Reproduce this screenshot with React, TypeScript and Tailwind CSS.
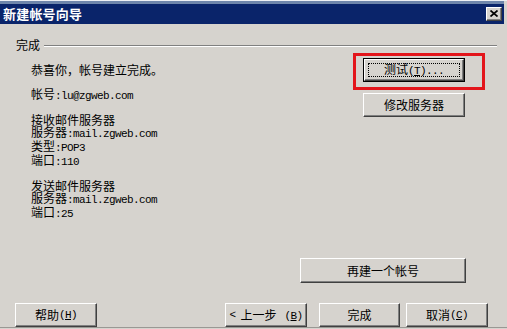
import React from "react";

const mono = "font-['Liberation_Mono',monospace] text-[11px] tracking-[-0.6px]";

const bevel =
  "bg-[#d6d3ce] border border-t-white border-l-white border-r-[#404040] border-b-[#404040] shadow-[inset_-1px_-1px_0_#808080]";

function Btn({ w, children, className = "" }: { w: string; children: React.ReactNode; className?: string }) {
  return (
    <div className={`${w} h-[24px] ${bevel} flex items-center justify-center text-[12px] leading-[12px] text-black ${className}`}>
      {children}
    </div>
  );
}

function Acc({ c }: { c: string }) {
  return (
    <span className={mono}>
      (<span className="underline underline-offset-[1px]">{c}</span>)
    </span>
  );
}

export default function App() {
  return (
    <div className="relative w-[507px] h-[329px] bg-[#d6d3ce] flex flex-col font-['Noto_Sans_CJK_SC',sans-serif] text-black overflow-hidden">
      {/* top frame */}
      <div className="h-[1px] bg-[#eef0f4]" />
      <div className="h-[3px] bg-[#6f86ab] mr-[3px]" />
      {/* title bar */}
      <div className="h-[21px] bg-[#0a246a] mr-[3px] flex items-center justify-between pl-[3px] pr-[2px]">
        <span className="text-white font-bold text-[13px] leading-[13px] tracking-[0.2px]">新建帐号向导</span>
        <div className={`w-[16px] h-[14px] ${bevel} flex items-center justify-center`}>
          <svg width="8" height="7" viewBox="0 0 8 7">
            <path d="M0.5 0.5 L7.5 6.5 M7.5 0.5 L0.5 6.5" stroke="black" strokeWidth="1.7" />
          </svg>
        </div>
      </div>

      {/* body */}
      <div className="flex flex-col px-[16px]">
        {/* group header */}
        <div className="mt-[15px] h-[12px] flex items-center">
          <span className="text-[12px] leading-[12px]">完成</span>
          <div className="flex-1 ml-[4px] mr-[-6px] mt-[1px] border-t border-t-[#808080] border-b border-b-white" />
        </div>

        {/* content */}
        <div className="mt-[7px] flex items-start">
          <div className="w-[347px] pl-[15px] pt-[6px] text-[12px] leading-[12px]">
            <div>恭喜你，帐号建立完成。</div>
            <div className="h-[12px]" />
            <div>
              帐号<span className={mono}>:lu@zgweb.com</span>
            </div>
            <div className="h-[12px]" />
            <div>接收邮件服务器</div>
            <div>
              服务器<span className={mono}>:mail.zgweb.com</span>
            </div>
            <div>
              类型<span className={mono}>:POP3</span>
            </div>
            <div>
              端口<span className={mono}>:110</span>
            </div>
            <div className="h-[12px]" />
            <div>发送邮件服务器</div>
            <div>
              服务器<span className={mono}>:mail.zgweb.com</span>
            </div>
            <div>
              端口<span className={mono}>:25</span>
            </div>
          </div>
          <div className="flex flex-col gap-[11px]">
            <div className="w-[102px] h-[24px] border border-black">
              <div className={`relative w-full h-full ${bevel} flex items-center justify-center text-[12px] leading-[12px]`}>
                <div className="absolute inset-[3px] border border-dotted border-black" />
                <span>
                  测试<Acc c="T" />
                  <span className={mono}>...</span>
                </span>
              </div>
            </div>
            <Btn w="w-[102px]">修改服务器</Btn>
          </div>
        </div>

        {/* add another account */}
        <div className="mt-[38px] flex">
          <Btn w="w-[166px]" className="ml-[284px] h-[25px]">再建一个帐号</Btn>
        </div>
      </div>

      {/* footer */}
      <div className="mt-[20px] flex pl-[15px]">
        <Btn w="w-[82px]">
          帮助<Acc c="H" />
        </Btn>
        <Btn w="w-[82px]" className="ml-[128px]">
          <span className={mono}>&lt;</span>
          <span className="ml-[5px]">上一步</span>
          <span className="ml-[8px]">
            <Acc c="B" />
          </span>
        </Btn>
        <Btn w="w-[81px]" className="ml-[12px]">完成</Btn>
        <Btn w="w-[82px]" className="ml-[6px]">
          取消<Acc c="C" />
        </Btn>
      </div>

      <div className="mt-auto h-[1px] bg-[#9a9894]" />
      <div className="h-[1px] bg-[#d6d3ce]" />

      {/* red highlight annotation */}
      <div className="absolute left-[353px] top-[53px] w-[132px] h-[37px] border-[3px] border-[#e3151b]" />
    </div>
  );
}
